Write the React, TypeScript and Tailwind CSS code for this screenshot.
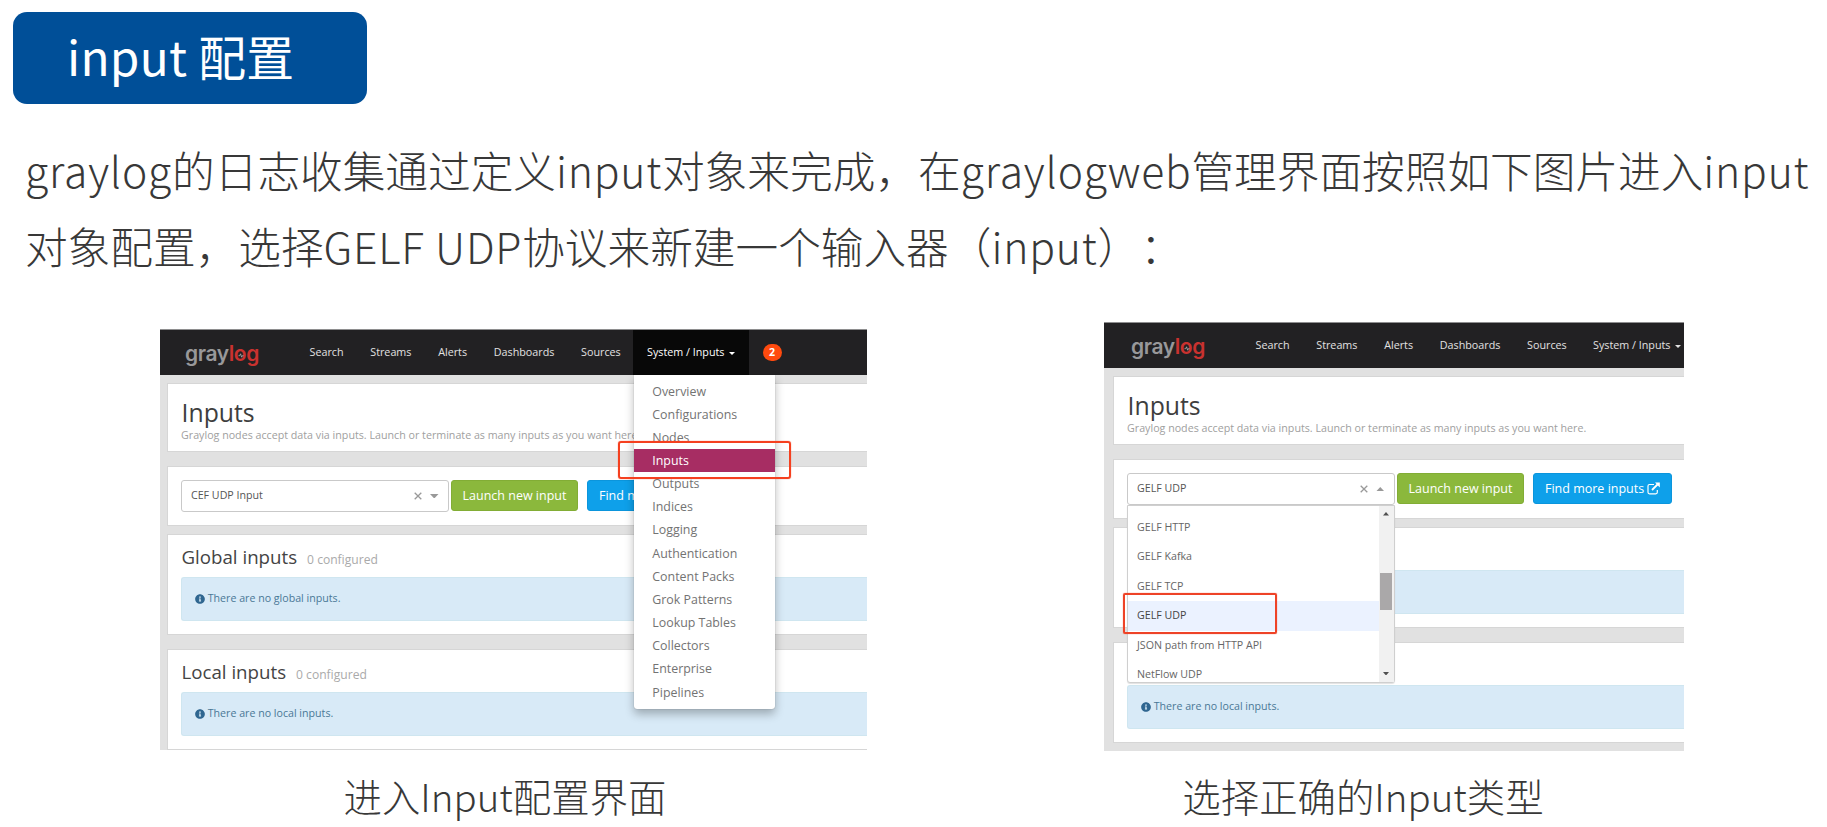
import React from "react";
import { FaInfoCircle } from "react-icons/fa";

const navItems = ["Search", "Streams", "Alerts", "Dashboards", "Sources"];
const menuItems = [
  "Overview",
  "Configurations",
  "Nodes",
  "Inputs",
  "Outputs",
  "Indices",
  "Logging",
  "Authentication",
  "Content Packs",
  "Grok Patterns",
  "Lookup Tables",
  "Collectors",
  "Enterprise",
  "Pipelines",
];
const inputTypes = ["GELF HTTP", "GELF Kafka", "GELF TCP", "GELF UDP", "JSON path from HTTP API", "NetFlow UDP"];

function Logo() {
  return (
    <div className="flex w-[74px] shrink-0 font-['Inter',sans-serif] text-[21px] leading-[24px] font-semibold tracking-[-0.4px]">
      <span className="text-[#98989a]">gray</span>
      <span className="relative text-[#c9322f]">
        log
        <svg className="absolute top-[11px] left-[9px] h-[5px] w-[6px]" viewBox="0 0 6 5" fill="none" stroke="#a9a9ab" strokeWidth="0.9">
          <path d="M0.5 2.7h1.2l0.9-1.9 1 3.4 0.8-1.5h1.1" />
        </svg>
      </span>
    </div>
  );
}

function Caret({ up = false, className = "" }: { up?: boolean; className?: string }) {
  return (
    <svg className={className} viewBox="0 0 8 4" preserveAspectRatio="none" fill="currentColor">
      <path d={up ? "M0 4L4 0L8 4Z" : "M0 0L4 4L8 0Z"} />
    </svg>
  );
}

function NavBar({ menuOpen }: { menuOpen: boolean }) {
  return (
    <div
      className={
        menuOpen
          ? "flex h-[46px] shrink-0 items-stretch border-t border-[#8e8e8f] bg-[#222123] pl-[25px] text-[10.75px] whitespace-nowrap text-[#e2e2e2]"
          : "flex h-[46px] shrink-0 items-stretch border-t border-[#8e8e8f] bg-[#222123] pl-[27px] text-[10.75px] whitespace-nowrap text-[#e2e2e2]"
      }
    >
      <div className="flex items-center pt-[2px]">
        <Logo />
      </div>
      <div className="flex w-[361px] shrink-0 items-center gap-[26.7px] pb-px pl-[50.5px]">
        {navItems.map((n) => (
          <span key={n}>{n}</span>
        ))}
      </div>
      <div
        className={
          menuOpen
            ? "relative ml-[13px] flex w-[116px] shrink-0 items-center bg-[#080808] pb-px pl-[14px] text-white"
            : "relative ml-[13px] flex w-[116px] shrink-0 items-center pb-px pl-[14px]"
        }
      >
        <span>System / Inputs</span>
        <Caret className="mt-[3px] ml-[5px] h-[3px] w-[6px]" />
        {menuOpen && <SystemMenu />}
      </div>
      {menuOpen && (
        <div className="flex items-center pl-[13.5px]">
          <span className="flex h-[17px] w-[19px] items-center justify-center rounded-full bg-[#ff4a0e] text-[10.6px] font-bold text-white">2</span>
        </div>
      )}
    </div>
  );
}

function SystemMenu() {
  return (
    <div className="absolute top-[45px] left-[1px] z-10 h-[333.5px] w-[141px] rounded-b-[3px] bg-white pt-[4.5px] text-[12.4px] text-[#737373] shadow-[0_5px_10px_rgba(0,0,0,0.28),0_0_1px_rgba(0,0,0,0.4)]">
      {menuItems.map((m) => (
        <div
          key={m}
          className={
            m === "Inputs"
              ? "flex h-[23.17px] items-center bg-[#a72d63] pt-[1.5px] pl-[18.3px] text-white"
              : "flex h-[23.17px] items-center pt-[1.5px] pl-[18.3px]"
          }
        >
          {m}
        </div>
      ))}
      <div className="absolute top-[66px] left-[-16.5px] h-[38px] w-[173.5px] rounded-[3px] border-2 border-[#f5401f] shadow-[0_0_1px_#f5401f]" />
    </div>
  );
}

function TypeList() {
  return (
    <div className="absolute top-[31px] left-[-1px] z-10 flex h-[178px] w-[267.5px] rounded-b-[3px] border border-[#cfcfcf] bg-white shadow-[0_1px_1px_rgba(0,0,0,0.12)]">
      <div className="grow overflow-hidden pt-[7px]">
        {inputTypes.map((t) => (
          <div
            key={t}
            className={
              t === "GELF UDP"
                ? "flex h-[29.4px] items-center bg-[#ebf2ff] pt-[0.5px] pl-[9px] text-[#444]"
                : "flex h-[29.4px] items-center pt-[0.5px] pl-[9px] text-[#666]"
            }
          >
            {t}
          </div>
        ))}
      </div>
      <div className="flex w-[15px] flex-col items-center bg-[#f1f1f1] text-[#505050]">
        <Caret up className="mt-[6px] h-[3.5px] w-[6px]" />
        <div className="mt-[57px] h-[37px] w-[12px] bg-[#aaa8a9]" />
        <Caret className="mt-auto mb-[7px] h-[3.5px] w-[6px]" />
      </div>
      <div className="absolute top-[87px] left-[-5px] h-[41px] w-[154px] rounded-[2px] border-2 border-[#ee4327] shadow-[0_0_1px_#ee4327]" />
    </div>
  );
}

function Info({ text }: { text: string }) {
  return (
    <div className="mt-[9px] flex h-[44px] items-center gap-[3px] rounded-l-[3px] border border-r-0 border-[#cfe6f0] bg-[#d8eaf7] pl-[12.7px] text-[10.65px] text-[#4a7896]">
      <FaInfoCircle className="h-[10px] w-[10px] text-[#2f6690]" />
      <span>{text}</span>
    </div>
  );
}

function InputGroup({ title, text, className }: { title: string; text: string; className: string }) {
  return (
    <div className={className}>
      <div className="flex h-[25px] items-baseline gap-[10px] pt-px pl-[0.5px]">
        <span className="text-[18.7px] leading-[25px] text-[#444]">{title}</span>
        <span className="text-[12.1px] text-[#aaa]">0 configured</span>
      </div>
      <Info text={text} />
    </div>
  );
}

function Console({ open, className }: { open: "menu" | "types"; className: string }) {
  const types = open === "types";
  const card = "shrink-0 border border-r-0 border-[#d6d6d6] bg-white pl-[13px]";
  return (
    <div className={className}>
      <NavBar menuOpen={!types} />
      <div className={types ? "flex flex-col pt-[8px] pl-[9px]" : "flex flex-col pt-[8px] pl-[7px]"}>
        <div className={`${card} h-[68.5px] pt-[11px]`}>
          <div className="pl-[0.5px] text-[24.8px] leading-[34px] text-[#3e3e3e]">Inputs</div>
          <div className="mt-[-1.5px] text-[10.7px] leading-[14px] text-[#a0a0a0]">
            Graylog nodes accept data via inputs. Launch or terminate as many inputs as you want here.
          </div>
        </div>
        <div className={`${card} mt-[14px] flex h-[60px] pt-[13.5px]`}>
          <div className="relative flex h-[32px] w-[267.5px] shrink-0 items-center rounded-[3px] border border-[#c9c9c9] bg-white pl-[9px] text-[10.65px] text-[#555]">
            <span className="grow">{types ? "GELF UDP" : "CEF UDP Input"}</span>
            <svg className="h-[8px] w-[8px] text-[#999]" viewBox="0 0 8 8" fill="none" stroke="currentColor" strokeWidth="1.3">
              <path d="M0.7 0.7L7.3 7.3M7.3 0.7L0.7 7.3" />
            </svg>
            <Caret up={types} className="mr-[9px] ml-[8px] h-[4.5px] w-[8.5px] text-[#999]" />
            {types && <TypeList />}
          </div>
          <div className="ml-[2.5px] flex h-[31px] w-[127px] shrink-0 items-center justify-center rounded-[3px] border border-[#82ad35] bg-[#8bb83c] pt-px text-[12.5px] font-medium text-white">
            Launch new input
          </div>
          <div className="ml-[8.5px] flex h-[31px] w-[139px] shrink-0 items-center gap-[3px] rounded-[3px] border border-[#0b95dc] bg-[#0ea0ea] pt-px pl-[11.5px] text-[12.5px] font-medium text-white">
            Find more inputs
            <svg className="mt-[-2px] h-[13px] w-[13px] shrink-0" viewBox="0 0 13 13" fill="none" stroke="currentColor" strokeWidth="1.2">
              <path d="M7 2.5H2.5a1.5 1.5 0 0 0-1.5 1.5v6.3a1.5 1.5 0 0 0 1.5 1.5h6.3a1.5 1.5 0 0 0 1.5-1.5V8" />
              <path d="M5 8L10.5 2.5" strokeWidth="1.8" />
              <path d="M8 0.6H12.8V5.4Z" fill="currentColor" stroke="none" />
            </svg>
          </div>
        </div>
        <InputGroup className={`${card} mt-[8px] h-[101px] pt-[8px]`} title="Global inputs" text="There are no global inputs." />
        <InputGroup className={`${card} mt-[14px] h-[101px] pt-[8px]`} title="Local inputs" text="There are no local inputs." />
      </div>
    </div>
  );
}

function Latin({ children }: { children: React.ReactNode }) {
  return <span className="tracking-[0.78px]">{children}</span>;
}

export default function App() {
  return (
    <div className="h-[827px] w-[1827px] overflow-hidden bg-white pt-[12px] font-['Noto_Sans_CJK_SC',sans-serif] text-[#383838]">
      <h1 className="ml-[13px] flex h-[92px] w-[354px] items-center rounded-[14px] bg-[#004f98] pb-[4px] pl-[54px] text-[47.8px] leading-none tracking-[0.25px] whitespace-pre text-white">
        input 配置
      </h1>
      <div className="mt-[28px] ml-[25px] text-[42.67px] leading-[76px] font-light whitespace-nowrap [text-spacing-trim:space-all]">
        <p>
          <Latin>graylog</Latin>的日志收集通过定义<Latin>input</Latin>对象来完成，在<Latin>graylogweb</Latin>管理界面按照如下图片进入
          <Latin>input</Latin>
        </p>
        <p>
          对象配置，选择<Latin>GELF UDP</Latin>协议来新建一个输入器（<Latin>input</Latin>）：
        </p>
      </div>
      <div className="mt-[38px] flex items-start">
        <figure className="mt-[7px] ml-[160px] w-[707px]">
          <Console
            open="menu"
            className="h-[421px] w-[707px] overflow-hidden bg-[#e1e1e1] font-['Open_Sans',sans-serif] whitespace-nowrap"
          />
          <figcaption className="mt-[17px] ml-[-17px] text-center text-[38.4px] leading-[56px] font-light">进入Input配置界面</figcaption>
        </figure>
        <figure className="ml-[237px] w-[580px]">
          <Console
            open="types"
            className="h-[429px] w-[580px] overflow-hidden bg-[#e1e1e1] font-['Open_Sans',sans-serif] whitespace-nowrap"
          />
          <figcaption className="mt-[16px] ml-[-62px] text-center text-[38.4px] leading-[56px] font-light">选择正确的Input类型</figcaption>
        </figure>
      </div>
    </div>
  );
}
